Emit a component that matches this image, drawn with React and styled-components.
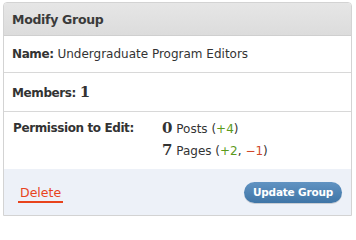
import React from 'react'
import styled, { createGlobalStyle } from 'styled-components'

const GlobalStyle = createGlobalStyle`
    html, body {
        margin: 0;
        padding: 0;
        background: #ffffff;
    }
    body {
        font-family: "DejaVu Sans", "Open Sans", sans-serif;
        color: #333333;
    }
`

const App = () => {
    return (
        <Page>
            <GlobalStyle />
            <Card>
                <Header>Modify Group</Header>
                <Row>
                    <Label>Name:</Label> Undergraduate Program Editors
                </Row>
                <Row $height={38}>
                    <Label>Members:</Label> <Count>1</Count>
                </Row>
                <PermRow>
                    <PermLabel>Permission to Edit:</PermLabel>
                    <PermList>
                        <PermItem>
                            <Count>0</Count> Posts (<Plus>+4</Plus>)
                        </PermItem>
                        <PermItem>
                            <Count>7</Count> Pages (<Plus>+2</Plus>, <Minus>−1</Minus>)
                        </PermItem>
                    </PermList>
                </PermRow>
                <Footer>
                    <DeleteLink>Delete</DeleteLink>
                    <UpdateButton>Update Group</UpdateButton>
                </Footer>
            </Card>
        </Page>
    )
}

const Page = styled.div`
    padding: 2px 4px 0 3px;
    width: 356px;
    height: 218px;
    box-sizing: border-box;
`

const Card = styled.div`
    width: 349px;
    border: 1px solid #d3d3d3;
    border-radius: 4px 4px 0 0;
    box-sizing: border-box;
    background: #ffffff;
`

const Header = styled.div`
    height: 32px;
    display: flex;
    align-items: center;
    padding-left: 8px;
    font-size: 12.5px;
    font-weight: bold;
    letter-spacing: -0.3px;
    color: #3a3a3a;
    background: linear-gradient(#e6e6e6, #dcdcdc);
    border-bottom: 1px solid #cfcfcf;
    border-radius: 3px 3px 0 0;
`

const Row = styled.div`
    height: ${p => p.$height || 36}px;
    line-height: ${p => (p.$height || 36) + 1}px;
    padding-left: 8px;
    font-size: 12px;
    border-bottom: 1px solid #d8d8d8;
    white-space: pre;
`

const Label = styled.span`
    font-weight: bold;
    letter-spacing: -0.4px;
`

const PermLabel = styled(Label)`
    width: 149px;
    flex-shrink: 0;
`

const Count = styled.span`
    font-family: "DejaVu Serif", "Liberation Serif", serif;
    font-weight: bold;
    font-size: 15px;
    color: #333333;
`

const PermRow = styled.div`
    height: 57px;
    display: flex;
    padding: 9px 0 0 9px;
    box-sizing: border-box;
    font-size: 12px;
`

const PermList = styled.div`
    display: flex;
    flex-direction: column;
    gap: 2px;
    margin-top: -2px;
`

const PermItem = styled.div`
    line-height: 19px;
    white-space: pre;
`

const Plus = styled.span`
    color: #5b9a1b;
`

const Minus = styled.span`
    color: #d0482a;
`

const Footer = styled.div`
    height: 46px;
    display: flex;
    align-items: center;
    justify-content: space-between;
    padding: 0 9px 0 14px;
    background: #edf1f8;
`

const DeleteLink = styled.span`
    font-size: 12.5px;
    color: #e8431c;
    padding: 0 2px 1px;
    border-bottom: 2px solid #e8431c;
    margin-top: 4px;
`

const UpdateButton = styled.button`
    height: 21px;
    padding: 0 9px;
    border: none;
    border-radius: 11px;
    background: linear-gradient(#6193c2, #3f75a6);
    color: #ffffff;
    font-family: "DejaVu Sans", sans-serif;
    font-size: 10.5px;
    font-weight: bold;
    letter-spacing: -0.2px;
    box-shadow: 0 1px 0 rgba(0, 0, 0, 0.15);
`

export default App
